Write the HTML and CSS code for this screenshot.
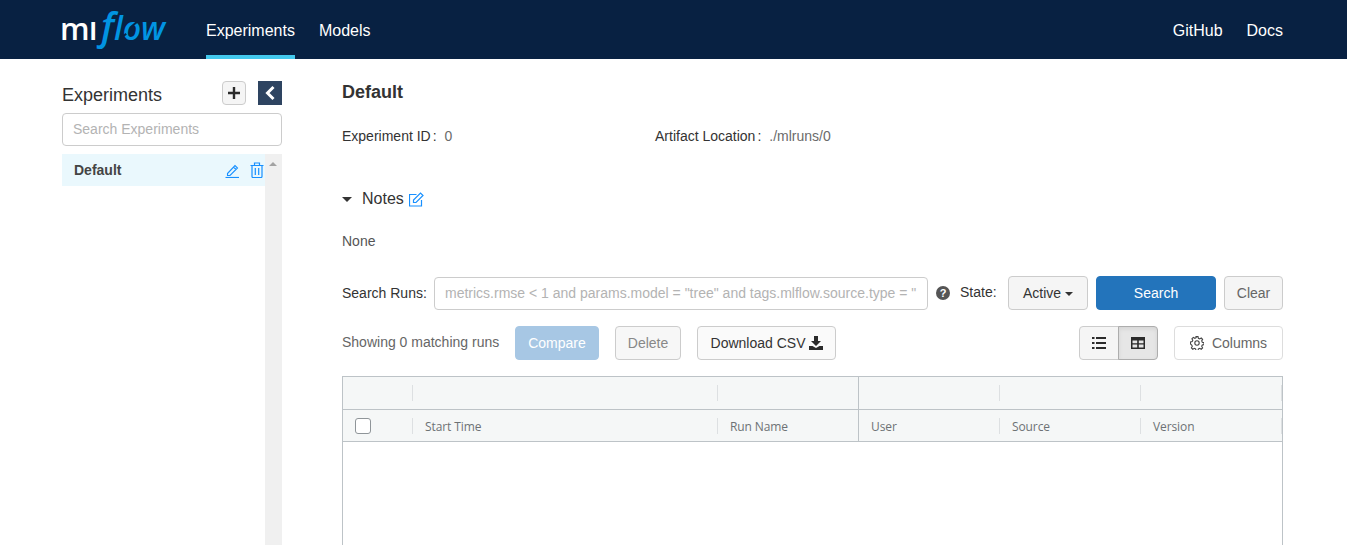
FILE: index.html
```html
<!DOCTYPE html>
<html lang="en">

<head>
    <meta charset="UTF-8">
    <title>MLflow</title>
    <link rel="stylesheet" href="styles.css">
</head>

<body>
    <header class="topbar">
        <div class="logo"><span class="logo-m">m</span><span class="logo-l">l</span><span class="logo-f">f</span><span class="logo-flow">low</span></div>
        <nav class="nav-left">
            <a class="nav-link active">Experiments</a>
            <a class="nav-link">Models</a>
        </nav>
        <nav class="nav-right">
            <a class="nav-link">GitHub</a>
            <a class="nav-link">Docs</a>
        </nav>
    </header>

    <div class="page">
        <aside class="sidebar">
            <div class="side-head">
                <span class="side-title">Experiments</span>
                <button class="add-btn">
                    <svg width="14" height="14" viewBox="0 0 14 14"><path d="M7 1v12M1 7h12" stroke="#2b2b2b" stroke-width="2.4"/></svg>
                </button>
                <button class="collapse-btn">
                    <svg width="12" height="16" viewBox="0 0 12 16"><path d="M9.5 2 3.5 8l6 6" fill="none" stroke="#fff" stroke-width="3"/></svg>
                </button>
            </div>
            <input class="side-search" type="text" placeholder="Search Experiments">
            <div class="side-list">
                <div class="side-items">
                    <div class="side-item">
                        <span class="side-name">Default</span>
                        <svg class="side-icon" width="15" height="15" viewBox="0 0 15 15"><path d="M2.500 10.500 10 2.500l2.500 2.500-7.500 7.500H2.500zM8.500 4l2.500 2.500" fill="none" stroke="#1890ff" stroke-width="1.100"/><path d="M.5 14.500h13.500" stroke="#1890ff" stroke-width="1.200"/></svg>
                        <svg class="side-icon trash" width="14" height="16" viewBox="0 0 14 16"><path d="M.5 3.500h13M4.500 3.500V1h5v2.500M2 3.500v11a1 1 0 0 0 1 1h8a1 1 0 0 0 1-1v-11M5.300 6v7M8.700 6v7" fill="none" stroke="#1890ff" stroke-width="1.200"/></svg>
                    </div>
                </div>
                <div class="side-scroll"><span class="scroll-arrow"></span></div>
            </div>
        </aside>

        <main class="content">
            <h1 class="exp-title">Default</h1>
            <div class="meta">
                <div class="meta-id"><span class="meta-label">Experiment ID</span><span class="meta-colon">:</span><span class="meta-value">0</span></div>
                <div><span class="meta-label">Artifact Location</span><span class="meta-colon">:</span><span class="meta-value">./mlruns/0</span></div>
            </div>

            <div class="notes-head">
                <span class="caret-down"></span>
                <span class="notes-title">Notes</span>
                <svg width="15" height="15" viewBox="0 0 15 15"><path d="M12.500 8v6h-12V2.500h7" fill="none" stroke="#1890ff" stroke-width="1.200"/><path d="M4.500 10.500V8L11.500 1l2.500 2.500-7 7z" fill="none" stroke="#1890ff" stroke-width="1.200"/></svg>
            </div>
            <div class="notes-body">None</div>

            <div class="search-row">
                <label class="search-label">Search Runs:</label>
                <input class="run-search" type="text" placeholder='metrics.rmse &lt; 1 and params.model = "tree" and tags.mlflow.source.type = "'>
                <span class="help">?</span>
                <span class="state-label">State:</span>
                <button class="btn btn-grey active-btn">Active <span class="caret-small"></span></button>
                <button class="btn btn-primary search-btn">Search</button>
                <button class="btn btn-grey clear-btn">Clear</button>
            </div>

            <div class="tool-row">
                <span class="match-count">Showing 0 matching runs</span>
                <button class="btn btn-compare">Compare</button>
                <button class="btn btn-delete">Delete</button>
                <button class="btn btn-white csv-btn">Download CSV
                    <svg width="14" height="14" viewBox="0 0 14 14"><path d="M5 0h4v5h3L7 10 2 5h3zM0 10h3.500L7 12l3.500-2H14v4H0z" fill="#2b2b2b"/></svg>
                </button>
                <div class="view-toggle">
                    <button class="toggle-btn">
                        <svg width="14" height="12" viewBox="0 0 14 12"><path d="M0 0h2.500v2H0zM4 0h10v2H4zM0 5h2.500v2H0zM4 5h10v2H4zM0 10h2.500v2H0zM4 10h10v2H4z" fill="#2b2b2b"/></svg>
                    </button>
                    <button class="toggle-btn on">
                        <svg width="14" height="12" viewBox="0 0 14 12"><path fill-rule="evenodd" d="M0 0h14v12H0zM1.500 3.500v2.700h4.700V3.500zM7.800 3.500v2.700h4.700V3.500zM1.500 7.600v3h4.700v-3zM7.800 7.600v3h4.700v-3z" fill="#2b2b2b"/></svg>
                    </button>
                </div>
                <button class="btn btn-white columns-btn">
                    <svg width="14" height="14" viewBox="0 0 14 14"><circle cx="7" cy="7" r="2.200" fill="none" stroke="#444" stroke-width="1.100"/><path d="M6 .6h2l.4 1.700 1.300.6 1.500-.9 1.400 1.400-.9 1.500.6 1.300 1.700.4v2l-1.700.4-.6 1.300.9 1.500-1.400 1.400-1.500-.9-1.300.6-.4 1.700H6l-.4-1.700-1.300-.6-1.500.9-1.400-1.400.9-1.500-.6-1.300L.5 8V6l1.700-.4.600-1.300-.9-1.500 1.400-1.400 1.500.9 1.300-.6z" fill="none" stroke="#444" stroke-width="1.100"/></svg>
                    Columns
                </button>
            </div>

            <div class="runs-table">
                <div class="group-row">
                    <div class="cell cell-check"></div>
                    <div class="cell cell-start"></div>
                    <div class="cell cell-name"></div>
                    <div class="cell cell-col"></div>
                    <div class="cell cell-col"></div>
                    <div class="cell cell-col"></div>
                </div>
                <div class="head-row">
                    <div class="cell cell-check"><span class="checkbox"></span></div>
                    <div class="cell cell-start">Start Time</div>
                    <div class="cell cell-name">Run Name</div>
                    <div class="cell cell-col">User</div>
                    <div class="cell cell-col">Source</div>
                    <div class="cell cell-col">Version</div>
                </div>
            </div>
        </main>
    </div>
</body>

</html>
```

FILE: styles.css
```css
* {
    box-sizing: border-box;
}

html,
body {
    height: 100%;
}

body {
    margin: 0;
    overflow: hidden;
    font-family: 'Liberation Sans', Arial, sans-serif;
    font-size: 14px;
    color: #333;
    background-color: white;
}

.topbar {
    display: flex;
    height: 59px;
    padding: 0 64px 0 62px;
    background-color: #082142;
}

.logo {
    position: relative;
    flex: none;
    width: 144px;
    height: 59px;
    line-height: 50px;
    white-space: nowrap;
    font-family: 'Open Sans', sans-serif;
    font-weight: 600;
}

/* the two gaps in the swirl of the logo's o */
.logo::before,
.logo::after {
    content: "";
    position: absolute;
    width: 7px;
    height: 2px;
    background-color: #082142;
    transform: rotate(-40deg);
}

.logo::before {
    left: 69px;
    top: 23px;
}

.logo::after {
    left: 58px;
    top: 35px;
}

.logo-m {
    margin-left: -2px;
    font-size: 31px;
    color: white;
}

.logo-l {
    font-size: 24px;
    font-weight: 700;
    color: white;
}

.logo-f {
    margin-left: 4px;
    font-size: 38px;
    font-style: italic;
    color: #0194e2;
}

.logo-flow {
    font-size: 32px;
    font-style: italic;
    color: #0194e2;
}

.nav-left,
.nav-right {
    display: flex;
    gap: 24px;
}

.nav-right {
    margin-left: auto;
}

.nav-link {
    height: 59px;
    line-height: 61px;
    font-size: 16px;
    color: white;
}

.nav-link.active {
    border-bottom: 4px solid #43c9ed;
}

.page {
    display: flex;
    height: calc(100% - 59px);
    padding: 0 64px 0 62px;
}

/* left column */
.sidebar {
    display: flex;
    flex-direction: column;
    flex: none;
    width: 220px;
    margin-right: 60px;
    padding-top: 22px;
}

.side-head {
    display: flex;
    align-items: center;
    height: 24px;
}

.side-title {
    flex: 1;
    font-size: 18px;
    line-height: 28px;
    margin-top: 4px;
}

.add-btn {
    display: flex;
    align-items: center;
    justify-content: center;
    width: 24px;
    height: 24px;
    padding: 0;
    border: 1px solid #ccc;
    border-radius: 4px;
    background-color: #f5f5f5;
}

.collapse-btn {
    display: flex;
    align-items: center;
    justify-content: center;
    width: 24px;
    height: 24px;
    margin-left: 12px;
    padding: 0;
    border: none;
    background-color: #2e4461;
}

.side-search {
    width: 100%;
    height: 33px;
    margin-top: 8px;
    padding: 0 10px 2px;
    border: 1px solid #ccc;
    border-radius: 4px;
    font-family: inherit;
    font-size: 14px;
}

input::placeholder {
    color: #b3b3b3;
    opacity: 1;
}

.side-list {
    display: flex;
    flex: 1;
    margin-top: 8px;
}

.side-items {
    flex: 1;
}

.side-item {
    display: flex;
    align-items: center;
    height: 32px;
    padding-left: 12px;
    background-color: #eaf8fd;
}

.side-name {
    flex: 1;
    font-weight: bold;
    color: #444;
}

.side-icon {
    margin-right: 10px;
}

.side-icon.trash {
    margin-right: 1px;
}

.side-scroll {
    width: 17px;
    background-color: #f0f0f0;
    padding: 8px 0 0 4px;
}

.scroll-arrow {
    display: block;
    width: 0;
    height: 0;
    border-left: 4px solid transparent;
    border-right: 4px solid transparent;
    border-bottom: 4px solid #a3a3a3;
}

/* right column */
.content {
    flex: 1;
    min-width: 0;
}

.exp-title {
    margin: 23px 0 0;
    font-size: 18px;
    line-height: 21px;
    font-weight: bold;
}

.meta {
    display: flex;
    margin-top: 23px;
    line-height: 20px;
}

.meta-id {
    width: 313px;
}

.meta-colon {
    margin: 0 8px 0 2px;
}

.meta-value {
    color: #6b6b6b;
}

.notes-head {
    display: flex;
    align-items: center;
    margin-top: 41px;
    height: 24px;
}

.caret-down {
    width: 0;
    height: 0;
    margin-right: 10px;
    border-left: 5px solid transparent;
    border-right: 5px solid transparent;
    border-top: 5px solid #333;
}

.notes-title {
    margin-right: 5px;
    font-size: 16px;
}

.notes-body {
    margin-top: 20px;
    line-height: 20px;
    color: #555;
}

.search-row {
    display: flex;
    align-items: center;
    height: 34px;
    margin-top: 25px;
}

.search-label {
    flex: none;
    width: 92px;
    white-space: nowrap;
}

.run-search {
    flex: none;
    width: 494px;
    height: 33px;
    padding: 0 10px;
    border: 1px solid #ccc;
    border-radius: 4px;
    font-family: inherit;
    font-size: 14px;
}

.help {
    flex: none;
    width: 14px;
    height: 14px;
    margin-left: 8px;
    border-radius: 50%;
    background-color: #555;
    color: white;
    font-size: 11px;
    font-weight: bold;
    line-height: 14px;
    text-align: center;
}

.state-label {
    flex: none;
    width: 48px;
    margin: 0 0 2px 10px;
}

.btn {
    flex: none;
    height: 34px;
    padding: 0;
    border: 1px solid #ccc;
    border-radius: 4px;
    font-family: inherit;
    font-size: 14px;
    color: #333;
}

.btn-grey {
    background-color: #f5f5f5;
}

.btn-white {
    background-color: white;
}

.active-btn {
    width: 80px;
}

.caret-small {
    display: inline-block;
    width: 0;
    height: 0;
    vertical-align: middle;
    border-left: 4px solid transparent;
    border-right: 4px solid transparent;
    border-top: 4px solid #333;
}

.btn-primary {
    border-color: #2374bb;
    background-color: #2374bb;
    color: white;
}

.search-btn {
    width: 120px;
    margin-left: 8px;
}

.clear-btn {
    width: 59px;
    margin-left: 8px;
    color: #666;
}

.tool-row {
    display: flex;
    align-items: center;
    height: 34px;
    margin-top: 16px;
}

.match-count {
    width: 173px;
    padding-bottom: 2px;
    color: #666;
}

.btn-compare {
    width: 84px;
    border-color: #a7c7e4;
    background-color: #a7c7e4;
    color: white;
}

.btn-delete {
    width: 66px;
    margin-left: 16px;
    background-color: #f7f7f7;
    color: #888;
}

.csv-btn {
    display: flex;
    align-items: center;
    justify-content: center;
    gap: 4px;
    width: 139px;
    margin-left: 16px;
    padding-left: 1px;
    background-color: #fafafa;
}

.view-toggle {
    display: flex;
    margin-left: auto;
}

.toggle-btn {
    display: flex;
    align-items: center;
    justify-content: center;
    width: 40px;
    height: 34px;
    padding: 0;
    border: 1px solid #ccc;
    border-radius: 4px 0 0 4px;
    background-color: #f5f5f5;
}

.toggle-btn.on {
    margin-left: -1px;
    border-color: #adadad;
    border-radius: 0 4px 4px 0;
    background-color: #e6e6e6;
    box-shadow: inset 0 2px 4px rgba(0, 0, 0, 0.08);
}

.columns-btn {
    display: flex;
    align-items: center;
    justify-content: center;
    gap: 8px;
    width: 109px;
    margin-left: 16px;
    border-color: #ddd;
    color: #666;
}

.runs-table {
    height: 200px;
    margin-top: 16px;
    border: 1px solid #bdc3c7;
    font-family: 'Open Sans', sans-serif;
    font-size: 12px;
    letter-spacing: -0.1px;
    color: #6d7275;
}

.group-row,
.head-row {
    display: flex;
    background-color: #f5f7f7;
    border-bottom: 1px solid #bdc3c7;
}

.group-row {
    height: 33px;
}

.head-row {
    height: 32px;
}

.cell {
    position: relative;
    flex: none;
    display: flex;
    align-items: center;
    padding-left: 12px;
}

.head-row .cell-start,
.head-row .cell-name,
.head-row .cell-col {
    padding-top: 2px;
}

.cell::after {
    content: "";
    position: absolute;
    top: 8px;
    right: 0;
    width: 1px;
    height: 16px;
    background-color: #dde0e2;
}

.cell-check {
    width: 70px;
}

.cell-start {
    width: 305px;
}

.cell-name {
    width: 141px;
    border-right: 1px solid #bdc3c7;
}

.cell-name::after {
    display: none;
}

.cell-col {
    width: 141px;
}

.checkbox {
    display: block;
    width: 16px;
    height: 16px;
    border: 1px solid #8f9599;
    border-radius: 3px;
    background-color: white;
}
```
